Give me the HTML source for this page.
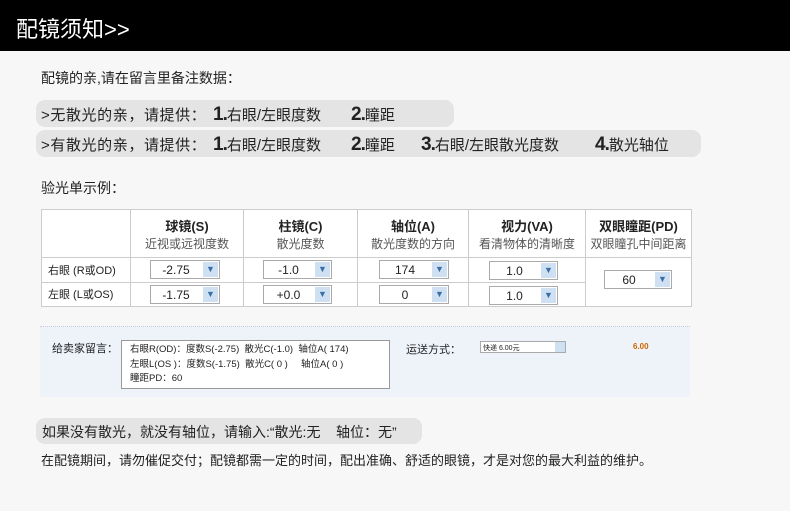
<!DOCTYPE html>
<html><head><meta charset="utf-8"><style>
*{margin:0;padding:0;box-sizing:border-box}
body{width:790px;height:511px;background:#f7f7f7;font-family:"Liberation Sans","Noto Sans CJK SC",sans-serif;color:#222;position:relative;overflow:hidden}
.a{position:absolute;white-space:nowrap}
.hdr{left:0;top:0;width:790px;height:51px;background:#000;color:#fff;font-size:22px;padding:12px 0 0 16px}
.pill{background:#e4e4e4;border-radius:9px;height:27px}
.t{position:absolute;white-space:nowrap;font-size:15px;top:4px}
.t b{font-family:"Liberation Sans",sans-serif;font-weight:900;font-size:19px;letter-spacing:-1px}
table{border-collapse:collapse;background:#fff}
td{border:1px solid #ccc;text-align:center;font-size:12px;color:#555}
.h b{display:block;font-size:13px;color:#222;font-weight:bold}
.sel{position:absolute;height:19px;border:1px solid #aaa;background:#fff;font-size:12px;color:#222;padding:2px 0 0 0}
.sel i{position:absolute;right:1px;top:1px;width:15px;height:15px;background:#cfe0f3;font-style:normal;color:#3a6ea5;font-size:9px;line-height:15px;text-align:center}
.sel span{position:absolute;left:0;right:18px;text-align:center}
</style></head><body>
<div class="a hdr">配镜须知&gt;&gt;</div>
<div class="a" style="left:41px;top:68px;font-size:14px">配镜的亲,请在留言里备注数据：</div>
<div class="a pill" style="left:36px;top:100px;width:418px">
<span class="t" style="left:5px;letter-spacing:0.6px">&gt;无散光的亲，请提供：</span>
<span class="t" style="left:177px"><b>1.</b>右眼/左眼度数</span>
<span class="t" style="left:315px"><b>2.</b>瞳距</span></div>
<div class="a pill" style="left:36px;top:130px;width:665px">
<span class="t" style="left:5px;letter-spacing:0.6px">&gt;有散光的亲，请提供：</span>
<span class="t" style="left:177px"><b>1.</b>右眼/左眼度数</span>
<span class="t" style="left:315px"><b>2.</b>瞳距</span>
<span class="t" style="left:385px"><b>3.</b>右眼/左眼散光度数</span>
<span class="t" style="left:559px"><b>4.</b>散光轴位</span></div>
<div class="a" style="left:41px;top:178px;font-size:14px">验光单示例：</div>
<table class="a" style="left:41px;top:209px;width:651px;height:98px">
<tr class="h" style="height:48px"><td style="width:89px"></td><td style="width:113px"><b>球镜(S)</b>近视或远视度数</td><td style="width:114px"><b>柱镜(C)</b>散光度数</td><td style="width:111px"><b>轴位(A)</b>散光度数的方向</td><td style="width:117px"><b>视力(VA)</b>看清物体的清晰度</td><td><b>双眼瞳距(PD)</b>双眼瞳孔中间距离</td></tr>
<tr><td style="text-align:left;padding-left:6px;color:#222;font-size:11px">右眼 (R或OD)</td><td></td><td></td><td></td><td></td><td rowspan="2"></td></tr>
<tr><td style="text-align:left;padding-left:6px;color:#222;font-size:11px">左眼 (L或OS)</td><td></td><td></td><td></td><td></td></tr>
</table>
<div class="sel" style="left:150px;top:260px;width:70px"><span>-2.75</span><i>▼</i></div>
<div class="sel" style="left:263px;top:260px;width:69px"><span>-1.0</span><i>▼</i></div>
<div class="sel" style="left:379px;top:260px;width:70px"><span>174</span><i>▼</i></div>
<div class="sel" style="left:489px;top:261px;width:69px"><span>1.0</span><i>▼</i></div>
<div class="sel" style="left:150px;top:285px;width:70px"><span>-1.75</span><i>▼</i></div>
<div class="sel" style="left:263px;top:285px;width:69px"><span>+0.0</span><i>▼</i></div>
<div class="sel" style="left:379px;top:285px;width:70px"><span>0</span><i>▼</i></div>
<div class="sel" style="left:489px;top:286px;width:69px"><span>1.0</span><i>▼</i></div>
<div class="sel" style="left:604px;top:270px;width:68px"><span>60</span><i>▼</i></div>
<div class="a" style="left:40px;top:326px;width:650px;height:71px;background:#eef3fa;border-top:1px dotted #ccd"></div>
<div class="a" style="left:52px;top:340px;font-size:11px">给卖家留言：</div>
<div class="a" style="left:121px;top:340px;width:269px;height:49px;background:#fff;border:1px solid #999;font-size:9.5px;line-height:14.5px;padding:2px 0 0 8px;color:#222">右眼R(OD)：度数S(-2.75) &nbsp;散光C(-1.0) &nbsp;轴位A( 174)<br>左眼L(OS )：度数S(-1.75) &nbsp;散光C( 0 ) &nbsp;&nbsp;&nbsp;&nbsp;轴位A( 0 )<br>瞳距PD：60</div>
<div class="a" style="left:406px;top:341px;font-size:11px">运送方式：</div>
<div class="a" style="left:480px;top:341px;width:86px;height:12px;background:#fff;border:1px solid #aaa;font-size:7px;padding:1px 0 0 2px">快递 6.00元<span style="position:absolute;right:0;top:0;width:10px;height:10px;background:#cfe0f3"></span></div>
<div class="a" style="left:633px;top:342px;font-size:8px;color:#c60;font-weight:bold">6.00</div>
<div class="a pill" style="left:36px;top:418px;width:386px;height:26px;font-size:14px;padding:4px 0 0 6px">如果没有散光，就没有轴位，请输入:“散光:无 &nbsp;&nbsp;&nbsp;轴位：无”</div>
<div class="a" style="left:41px;top:450px;font-size:13px">在配镜期间，请勿催促交付；配镜都需一定的时间，配出准确、舒适的眼镜，才是对您的最大利益的维护。</div>
</body></html>
